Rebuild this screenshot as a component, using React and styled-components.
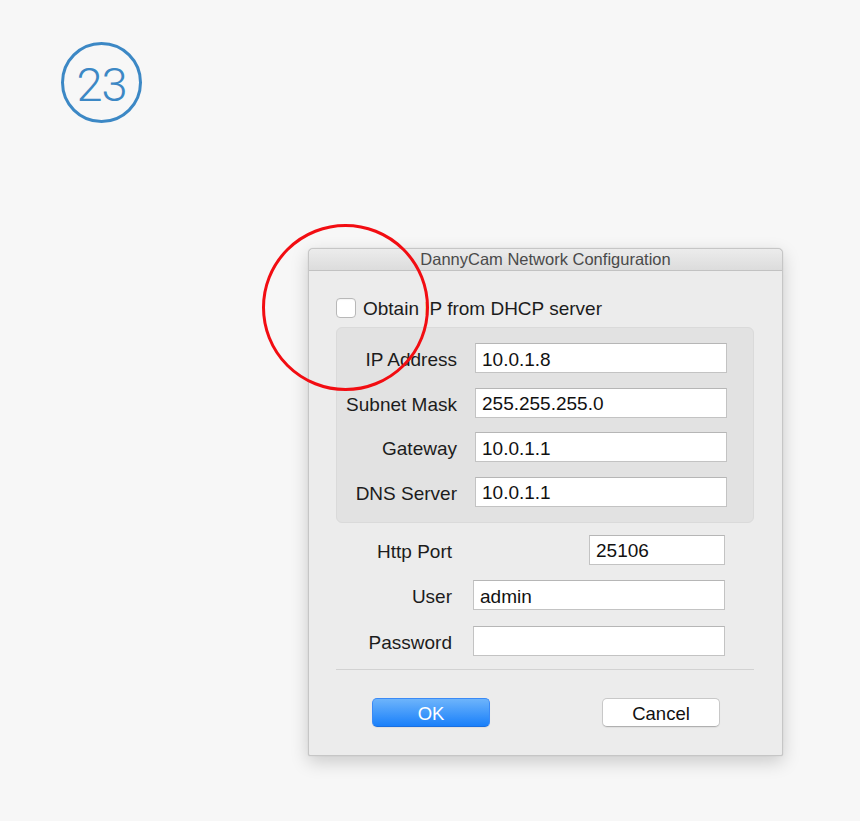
import React, { useState } from "react";
import styled, { createGlobalStyle } from "styled-components";

const GlobalStyle = createGlobalStyle`
  html, body {
    margin: 0;
    padding: 0;
    background: #f7f7f7;
  }
  body {
    font-family: "Liberation Sans", Arial, sans-serif;
    color: #1c1c1c;
  }
`;

const Page = styled.div`
  position: relative;
  width: 860px;
  min-height: 821px;
  padding: 42px 0 0 61px;
  box-sizing: border-box;
`;

const StepBadge = styled.div`
  width: 81px;
  height: 81px;
  box-sizing: border-box;
  border: 3px solid #3c88c5;
  border-radius: 50%;
  display: flex;
  align-items: center;
  justify-content: center;
  color: #3c88c5;
  font-family: Roboto, "Liberation Sans", sans-serif;
  font-weight: 300;
  font-size: 47px;
  letter-spacing: -1px;
  padding-top: 3px;
`;

const Highlight = styled.div`
  position: absolute;
  left: 262px;
  top: 224px;
  width: 167px;
  height: 167px;
  box-sizing: border-box;
  border: 3px solid #f20d12;
  border-radius: 50%;
  pointer-events: none;
  z-index: 5;
`;

const Dialog = styled.div`
  margin: 125px 0 0 247px;
  width: 475px;
  height: 508px;
  box-sizing: border-box;
  background: #ececec;
  border: 1px solid #c6c6c6;
  border-radius: 5px 5px 2px 2px;
  box-shadow: 0 6px 18px rgba(0, 0, 0, 0.18), 0 0 1px rgba(0, 0, 0, 0.2);
  display: flex;
  flex-direction: column;
`;

const TitleBar = styled.div`
  height: 22px;
  box-sizing: border-box;
  background: linear-gradient(#ececec, #dcdcdc);
  border-bottom: 1px solid #c2c2c2;
  border-radius: 5px 5px 0 0;
  display: flex;
  align-items: center;
  justify-content: center;
  font-size: 16.5px;
  color: #4a4a4a;
`;

const Body = styled.div`
  padding: 27px 28px 0 27px;
  display: flex;
  flex-direction: column;
`;

const CheckRow = styled.label`
  display: flex;
  align-items: center;
  gap: 7px;
  font-size: 19px;
  height: 20px;
  cursor: default;
`;

const CheckBox = styled.span`
  width: 20px;
  height: 20px;
  box-sizing: border-box;
  border: 1px solid #b8b8b8;
  border-radius: 4px;
  background: #fff;
  box-shadow: inset 0 1px 1px rgba(0, 0, 0, 0.04);
  display: flex;
  align-items: center;
  justify-content: center;
  font-size: 14px;
  color: #1a82fb;
`;

const CheckText = styled.span`
  padding-top: 2px;
`;

const Panel = styled.div`
  margin-top: 9px;
  background: #e2e2e2;
  border: 1px solid #dadada;
  border-radius: 6px;
  padding: 15px 27px 15px 0;
  display: grid;
  grid-template-columns: 120px 252px;
  column-gap: 18px;
  row-gap: 14.5px;
  align-items: center;
`;

const Fields = styled.div`
  margin-top: 12px;
  display: grid;
  grid-template-columns: 116px 252px;
  column-gap: 21px;
  row-gap: 15.5px;
  align-items: center;
`;

const Label = styled.span`
  font-size: 19px;
  text-align: right;
  white-space: nowrap;
  padding-top: 4px;
`;

const TextField = styled.input`
  width: ${(p) => p.$width || 252}px;
  justify-self: ${(p) => (p.$width ? "end" : "start")};
  height: 30px;
  box-sizing: border-box;
  border: 1px solid #c3c3c3;
  border-top-color: #b6b6b6;
  background: #fff;
  padding: 3px 6px 0;
  font-family: "Liberation Sans", Arial, sans-serif;
  font-size: 19px;
  color: #111;
  outline: none;
`;

const Separator = styled.hr`
  margin: 13px 0 0;
  border: none;
  border-top: 1px solid #d2d2d2;
`;

const ButtonRow = styled.div`
  margin-top: 28px;
  padding: 0 34px 0 36px;
  display: flex;
  justify-content: space-between;
`;

const Button = styled.button`
  width: 118px;
  height: 29px;
  box-sizing: border-box;
  border-radius: 5px;
  font-family: "Liberation Sans", Arial, sans-serif;
  font-size: 18.5px;
  padding: 3px 0 0;
  cursor: pointer;
  border: 1px solid ${(p) => (p.$primary ? "#3a8af6" : "#c8c8c8")};
  border-bottom-color: ${(p) => (p.$primary ? "#1a6fe0" : "#b0b0b0")};
  background: ${(p) =>
    p.$primary ? "linear-gradient(#6db4fb, #1a80fa)" : "#fff"};
  color: ${(p) => (p.$primary ? "#fff" : "#111")};
  box-shadow: 0 1px 1px rgba(0, 0, 0, 0.06);
`;

const networkFields = [
  { label: "IP Address", value: "10.0.1.8" },
  { label: "Subnet Mask", value: "255.255.255.0" },
  { label: "Gateway", value: "10.0.1.1" },
  { label: "DNS Server", value: "10.0.1.1" },
];

export default function App() {
  const [dhcp, setDhcp] = useState(false);
  const [values, setValues] = useState(networkFields.map((f) => f.value));
  const [port, setPort] = useState("25106");
  const [user, setUser] = useState("admin");
  const [password, setPassword] = useState("");

  return (
    <>
      <GlobalStyle />
      <Page>
        <StepBadge>23</StepBadge>
        <Highlight />
        <Dialog>
          <TitleBar>DannyCam Network Configuration</TitleBar>
          <Body>
            <CheckRow onClick={() => setDhcp(!dhcp)}>
              <CheckBox>{dhcp ? "✓" : ""}</CheckBox>
              <CheckText>Obtain IP from DHCP server</CheckText>
            </CheckRow>
            <Panel>
              {networkFields.map((f, i) => (
                <React.Fragment key={f.label}>
                  <Label>{f.label}</Label>
                  <TextField
                    value={values[i]}
                    onChange={(e) => {
                      const next = [...values];
                      next[i] = e.target.value;
                      setValues(next);
                    }}
                  />
                </React.Fragment>
              ))}
            </Panel>
            <Fields>
              <Label>Http Port</Label>
              <TextField
                $width={136}
                value={port}
                onChange={(e) => setPort(e.target.value)}
              />
              <Label>User</Label>
              <TextField value={user} onChange={(e) => setUser(e.target.value)} />
              <Label>Password</Label>
              <TextField
                type="password"
                value={password}
                onChange={(e) => setPassword(e.target.value)}
              />
            </Fields>
            <Separator />
            <ButtonRow>
              <Button $primary>OK</Button>
              <Button>Cancel</Button>
            </ButtonRow>
          </Body>
        </Dialog>
      </Page>
    </>
  );
}
